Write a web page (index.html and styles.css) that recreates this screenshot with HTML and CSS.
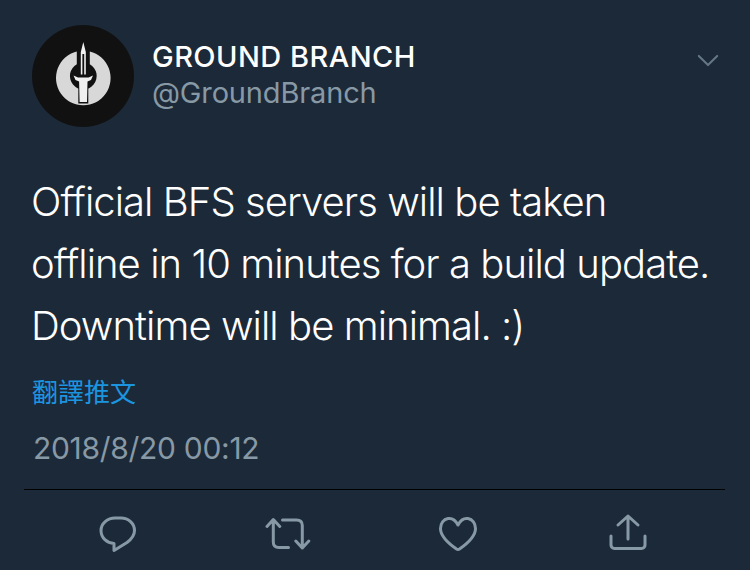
FILE: index.html
```html
<!DOCTYPE html>
<html lang="zh-Hant">
<head>
<meta charset="utf-8">
<title>Tweet</title>
<link rel="stylesheet" href="styles.css">
</head>
<body>
<main class="tweet">
  <header class="head">
    <svg class="avatar" viewBox="0 0 102 102" aria-hidden="true">
      <circle cx="51" cy="51" r="51" fill="#111112"/>
      <path d="M44.800 26.500A27.300 27.300 0 1 0 57.800 26.500L57.800 39.300A13.400 13.400 0 1 1 44.800 39.300Z" fill="#d8d8d8"/>
      <path d="M51.300 15L55.300 27L55.300 48L62 49.500L60 57L56.300 58L56.300 78.500L46.300 78.500L46.300 58L42.500 57L40.500 49.500L47.300 48L47.300 27Z" fill="#111112"/>
      <path d="M51.300 17L53.800 27L53.800 49.500L52.200 49.500L52.200 29L50.400 29L50.400 49.500L48.800 49.500L48.800 27Z" fill="#f0f0f0"/>
      <path d="M41.500 50.500L46 52.500L56.600 52.500L61 50.500L59 55L55.500 56.500L55 77L47.600 77L47.100 56.500L43.500 55Z" fill="#f0f0f0"/>
    </svg>
    <div class="names">
      <div class="name">GROUND BRANCH</div>
      <div class="handle">@GroundBranch</div>
    </div>
    <svg class="chevron" viewBox="0 0 24 14" aria-hidden="true">
      <path d="M2 2L12 12L22 2" fill="none" stroke="#657786" stroke-width="2.200" stroke-linecap="round" stroke-linejoin="round"/>
    </svg>
  </header>
  <p class="text">Official BFS servers will be taken<br>offline in 10 minutes for a build update.<br>Downtime will be minimal. :)</p>
  <div class="translate">翻譯推文</div>
  <div class="time">2018/8/20 00:12</div>
  <div class="rule"></div>
  <nav class="actions">
    <svg class="icon" viewBox="0 0 40 40" aria-hidden="true">
      <path d="M17 5H23C30.500 5 36.500 10.500 36.500 17.500C36.500 23 33 26.500 29 29.500L16 37.500V30.500C9 30 3 25 3 17.500C3 10.500 9.500 5 17 5Z" class="stroke"/>
    </svg>
    <svg class="icon" viewBox="0 0 46 40" aria-hidden="true">
      <path d="M2 13.500L8.300 6.500L14.800 13.500M8.300 7V29C8.300 32.500 10.300 34.500 13.800 34.500H23.500M17.500 7H31.500C35 7 37.300 9 37.300 12.500V35M30.800 28L37.300 35L43.800 28" class="stroke"/>
    </svg>
    <svg class="icon" viewBox="0 0 40 40" aria-hidden="true">
      <path d="M20 12C17.500 7 13.500 5 10 5.500C5.500 6.300 2.500 10.500 2.500 15.500C2.500 24 12 31.500 18.500 36C19.500 36.600 20.500 36.600 21.500 36C28 31.500 37.500 24 37.500 15.500C37.500 10.500 34.500 6.300 30 5.500C26.500 5 22.500 7 20 12Z" class="stroke"/>
    </svg>
    <svg class="icon" viewBox="0 0 40 40" aria-hidden="true">
      <path d="M20 26V3M10 12L20 3L30 12M3 23V32C3 34 4.500 35.500 6.500 35.500H33.500C35.500 35.500 37 34 37 32V23" class="stroke"/>
    </svg>
  </nav>
</main>
</body>
</html>
```
FILE: styles.css
```css
* { box-sizing: border-box; }
html, body { margin: 0; height: 100%; }
body {
  background: #1c2938;
  color: #fff;
  font-family: Inter, "Noto Sans CJK TC", sans-serif;
  overflow: hidden;
}
.tweet { height: 570px; padding: 25px 25px 0 32px; display: flex; flex-direction: column; }
.head { display: flex; align-items: flex-start; gap: 18px; height: 102px; }
.avatar { width: 102px; height: 102px; flex: none; }
.names { flex: 1; padding-top: 15px; }
.name { font-size: 29px; line-height: 34px; font-weight: 500; letter-spacing: 0.45px; }
.handle { font-size: 29px; line-height: 38px; color: #8899a6; letter-spacing: -0.15px; }
.chevron { width: 22px; height: 13px; margin: 29px 6px 0 0; flex: none; }
.text { margin: 44px 0 0 -1px; font-size: 40px; line-height: 62px; letter-spacing: -0.95px; white-space: nowrap; font-weight: 300; }
.translate { margin-top: 19px; height: 34px; font-size: 26px; line-height: 34px; color: #1b95e0; }
.time { margin: 20px 0 0 1px; font-size: 30px; line-height: 36px; color: #8899a6; letter-spacing: -0.3px; }
.rule { margin-top: 23px; height: 1px; background: #000; margin-left: -8px; }
.actions { display: grid; grid-template-columns: repeat(4, 170px); padding: 23px 0 0 1px; justify-items: center; }
.icon { height: 40px; width: auto; }
.stroke { fill: none; stroke: #8899a6; stroke-width: 3; stroke-linecap: round; stroke-linejoin: round; }
```
